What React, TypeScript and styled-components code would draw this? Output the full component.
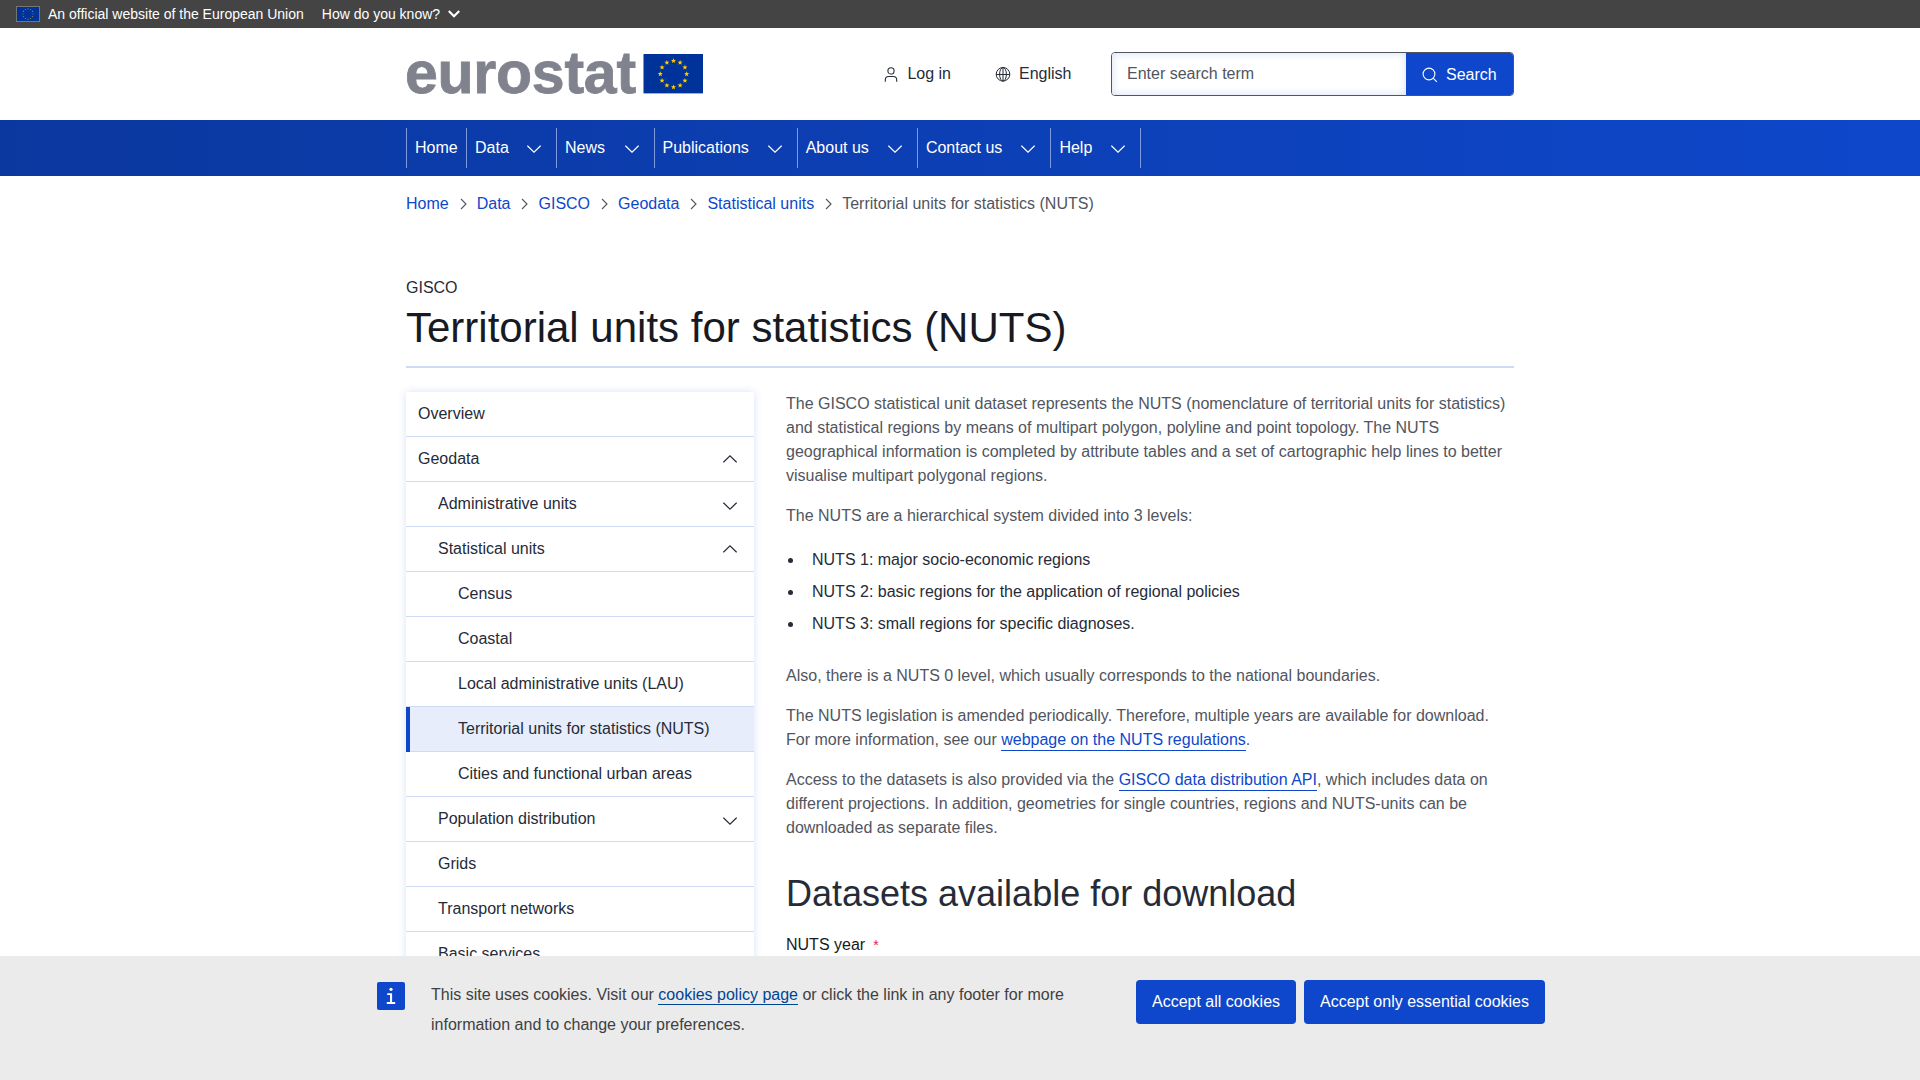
import React from "react";
import styled, { createGlobalStyle } from "styled-components";

const GlobalStyle = createGlobalStyle`
  *, *::before, *::after { box-sizing: border-box; }
  html, body { margin: 0; height: 100%; overflow: hidden; }
  body {
    font-family: Arial, "Liberation Sans", sans-serif;
    font-size: 16px;
    line-height: 24px;
    color: #262b38;
    background: #fff;
  }
  a { text-decoration: none; color: inherit; }
  ul { list-style: none; margin: 0; padding: 0; }
  h1, h2, p { margin: 0; font-weight: 400; }
  button { font: inherit; border: 0; margin: 0; cursor: pointer; }
  svg { display: block; flex: none; }
`;

const Page = styled.div`
  display: flex;
  flex-direction: column;
  height: 1080px;
  overflow: hidden;
`;

const PageBody = styled.div`
  flex: 1;
  min-height: 0;
  overflow: hidden;
`;

const Container = styled.div`
  width: 1108px;
  margin: 0 auto;
`;

const GlobalBanner = styled.div`
  display: flex;
  align-items: center;
  height: 28px;
  padding-left: 16px;
  background: #444;
  color: #fff;
  font-size: 14px;
  line-height: 20px;
`;

const BannerText = styled.span`
  margin-left: 8px;
`;

const BannerButton = styled.button`
  display: flex;
  align-items: center;
  gap: 8px;
  margin-left: 18px;
  padding: 0;
  background: none;
  color: inherit;
`;

const HeaderRow = styled(Container)`
  display: flex;
  height: 92px;
`;

const Logo = styled.a`
  display: flex;
  align-items: flex-start;
  width: 297px;
  padding-top: 26px;
`;

const LogoText = styled.span`
  width: 238px;
  margin-top: -14px;
  margin-left: -1px;
  font-size: 59px;
  line-height: 66px;
  font-weight: 700;
  letter-spacing: -0.25px;
  color: #80838d;
  -webkit-text-stroke: 0.8px #80838d;
`;

const HeaderTools = styled.div`
  display: flex;
  align-items: flex-start;
  margin-left: auto;
  padding-top: 24px;
`;

const ToolLink = styled.a<{ $after: number }>`
  display: flex;
  align-items: center;
  gap: 8px;
  height: 43px;
  margin-right: ${(p) => p.$after}px;
`;

const SearchForm = styled.div`
  display: flex;
  width: 403.5px;
  height: 44px;
  border: 1px solid #515560;
  border-radius: 4px;
  overflow: hidden;
`;

const SearchInput = styled.input`
  flex: 1;
  min-width: 0;
  padding: 0 16px 1px 15.5px;
  border: 0;
  outline: 0;
  font: inherit;
  color: #262b38;
  background: #fff;
  box-shadow: inset 0 0 8px rgba(60, 90, 190, 0.2);
  &::placeholder { color: #515560; opacity: 1; }
`;

const SearchButton = styled.button`
  display: flex;
  align-items: center;
  gap: 8px;
  width: 107px;
  padding: 2px 0 0 16px;
  background: #0e47cb;
  color: #fff;
`;

const NavBar = styled.nav`
  height: 56px;
  padding-top: 8px;
  background: linear-gradient(90deg, #0b389f 0%, #0e47cb 100%);
  color: #fff;
`;

const NavList = styled.ul`
  display: flex;
  height: 40px;
`;

const NavItem = styled.li<{ $width: number }>`
  display: flex;
  align-items: center;
  justify-content: space-between;
  width: ${(p) => p.$width}px;
  padding-left: 8px;
  padding-bottom: 1px;
  border-left: 1px solid #7f9ade;
  white-space: nowrap;
`;

const NavChevron = styled.span`
  width: 29px;
  padding-top: 3px;
`;

const Crumbs = styled.ol`
  display: flex;
  align-items: center;
  margin: 0;
  padding: 16px 0 0;
  list-style: none;
  color: #515560;
`;

const Crumb = styled.li`
  display: flex;
  align-items: center;
`;

const CrumbLink = styled.a`
  color: #0e47cb;
`;

const CrumbSeparator = styled.span`
  padding: 0 8px;
  color: #515560;
`;

const TitleArea = styled.div`
  height: 152px;
  padding-top: 60px;
  border-bottom: 2px solid #cfdaf5;
`;

const Title = styled.h1`
  margin-top: 4px;
  font-size: 42px;
  line-height: 48px;
  color: #171a22;
`;

const Columns = styled.div`
  display: grid;
  grid-template-columns: 348px 728px;
  column-gap: 32px;
  margin-top: 24px;
`;

const SideNav = styled.ul`
  box-shadow: 0 0 8px rgba(14, 71, 203, 0.16);
`;

const SideItem = styled.li<{ $level: number; $active?: boolean }>`
  display: flex;
  justify-content: space-between;
  height: 45px;
  padding: 10px 0 0 ${(p) => (p.$active ? 8 : 12) + p.$level * 20}px;
  background: ${(p) => (p.$active ? "#e7edfb" : "#fff")};
  box-shadow: inset 0 -1px 0 #cfdaf5;
  border-left: ${(p) => (p.$active ? "4px solid #0e47cb" : "none")};
`;

const SideToggle = styled.span<{ $up: boolean }>`
  display: flex;
  width: 31px;
  padding-top: ${(p) => (p.$up ? 8 : 10)}px;
`;

const Prose = styled.main`
  color: #515560;
  p + p { margin-top: 16px; }
`;

const TextLink = styled.a`
  color: #0e47cb;
  border-bottom: 1px solid #0e47cb;
  padding-bottom: 2px;
`;

const Bullets = styled.ul`
  display: flex;
  flex-direction: column;
  gap: 8px;
  padding: 20px 0;
  margin-bottom: 8px;
  color: #262b38;
`;

const Bullet = styled.li`
  display: flex;
  align-items: center;
  &::before {
    content: "";
    width: 5px;
    height: 5px;
    margin: 1px 19px 0 2px;
    border-radius: 50%;
    background: #262b38;
  }
`;

const Subtitle = styled.h2`
  margin-top: 32px;
  font-size: 36px;
  line-height: 44px;
  color: #262b38;
`;

const FieldLabel = styled.label`
  display: block;
  margin-top: 17px;
  color: #171a22;
`;

const Required = styled.span`
  margin-left: 8px;
  font-size: 14px;
  color: #da1e5b;
`;

const CookieBanner = styled.aside`
  flex: none;
  height: 124px;
  padding-top: 24px;
  background: #ebebeb;
  color: #404040;
`;

const CookieInner = styled.div`
  display: flex;
  align-items: flex-start;
  width: 1168px;
  margin: 0 auto 0 377px;
`;

const CookieText = styled.p`
  width: 660px;
  margin-left: 26px;
  line-height: 30px;
`;

const CookieLink = styled.a`
  color: #004494;
  border-bottom: 1px solid #004494;
  padding-bottom: 1px;
`;

const CookieIcon = styled.div`
  padding-top: 2px;
`;

const CookieActions = styled.div`
  display: flex;
  gap: 8px;
  margin-left: auto;
`;

const CookieButton = styled.button<{ $width: number }>`
  width: ${(p) => p.$width}px;
  height: 44px;
  padding: 0 0 1px;
  border-radius: 4px;
  background: #0e47cb;
  color: #fff;
  white-space: nowrap;
`;

const starPoints = (cx: number, cy: number, r: number) =>
  Array.from({ length: 10 }, (_, i) => {
    const a = (Math.PI * i) / 5 - Math.PI / 2;
    const d = i % 2 ? r * 0.42 : r;
    return `${(cx + d * Math.cos(a)).toFixed(2)},${(cy + d * Math.sin(a)).toFixed(2)}`;
  }).join(" ");

const ring = Array.from({ length: 12 }, (_, i) => (Math.PI * i) / 6);

const EuFlag = () => (
  <svg width="60" height="40" viewBox="0 0 60 40">
    <path fill="#039" d="M.5 0H60v39H.5z" />
    <path fill="#8095cc" d="M.5 39H60v.8H.5z" />
    {ring.map((a) => (
      <polygon key={a} fill="#fc0" points={starPoints(30.5 + 13.2 * Math.sin(a), 20 - 13.2 * Math.cos(a), 2.7)} />
    ))}
  </svg>
);

const SmallFlag = () => (
  <svg width="24" height="16" viewBox="0 0 24 16">
    <rect x=".5" y=".5" width="23" height="15" fill="#039" stroke="#757575" />
    {ring.map((a) => (
      <circle key={a} cx={12 + 5.2 * Math.sin(a)} cy={8 - 5.2 * Math.cos(a)} r=".6" fill="#8d8a4a" />
    ))}
  </svg>
);

const Chevron = ({ up = false }: { up?: boolean }) => (
  <svg width="14" height="8" viewBox="0 0 14 8" fill="none" stroke="currentColor" strokeWidth="1.2">
    <path d={up ? "M.4 7.3 7 .9l6.6 6.4" : "M.4.7 7 7.1 13.6.7"} />
  </svg>
);

const menu = [
  { label: "Home", width: 60 },
  { label: "Data", width: 90, sub: true },
  { label: "News", width: 97.5, sub: true },
  { label: "Publications", width: 143.2, sub: true },
  { label: "About us", width: 120.2, sub: true },
  { label: "Contact us", width: 133.5, sub: true },
  { label: "Help", width: 89.8, sub: true },
];

const crumbs = ["Home", "Data", "GISCO", "Geodata", "Statistical units"];

type SideEntry = { label: string; level: number; toggle?: "up" | "down"; active?: boolean };

const sideEntries: SideEntry[] = [
  { label: "Overview", level: 0 },
  { label: "Geodata", level: 0, toggle: "up" },
  { label: "Administrative units", level: 1, toggle: "down" },
  { label: "Statistical units", level: 1, toggle: "up" },
  { label: "Census", level: 2 },
  { label: "Coastal", level: 2 },
  { label: "Local administrative units (LAU)", level: 2 },
  { label: "Territorial units for statistics (NUTS)", level: 2, active: true },
  { label: "Cities and functional urban areas", level: 2 },
  { label: "Population distribution", level: 1, toggle: "down" },
  { label: "Grids", level: 1 },
  { label: "Transport networks", level: 1 },
  { label: "Basic services", level: 1 },
];

export default function App() {
  return (
    <Page>
      <GlobalStyle />
      <PageBody>
        <GlobalBanner>
          <SmallFlag />
          <BannerText>An official website of the European Union</BannerText>
          <BannerButton>
            How do you know?
            <svg width="12" height="8" viewBox="0 0 12 8" fill="none" stroke="#fff" strokeWidth="2.2">
              <path d="M.8 1 6 6.2 11.2 1" />
            </svg>
          </BannerButton>
        </GlobalBanner>

        <HeaderRow>
          <Logo href="#">
            <LogoText>eurostat</LogoText>
            <EuFlag />
          </Logo>
          <HeaderTools>
            <ToolLink href="#" $after={44}>
              <svg width="16" height="16" viewBox="0 0 16 16" fill="none" stroke="currentColor" strokeWidth="1.1">
                <circle cx="8" cy="4.9" r="3.1" />
                <path d="M2.3 15.7v-1.9c0-2 1.4-3.3 3.4-3.3h4.6c2 0 3.4 1.3 3.4 3.3v1.9" />
              </svg>
              Log in
            </ToolLink>
            <ToolLink href="#" $after={39}>
              <svg width="16" height="16" viewBox="0 0 16 16" fill="none" stroke="currentColor" strokeWidth="1">
                <circle cx="8" cy="8.3" r="6.8" />
                <ellipse cx="8" cy="8.3" rx="3.4" ry="6.8" />
                <path d="M1.2 8.5h13.6M8 1.5v13.6" />
              </svg>
              English
            </ToolLink>
            <SearchForm>
              <SearchInput placeholder="Enter search term" />
              <SearchButton>
                <svg width="16" height="16" viewBox="0 0 16 16" fill="none" stroke="currentColor" strokeWidth="1.1">
                  <circle cx="7" cy="7" r="5.9" />
                  <path d="m11.3 11.3 3.6 3.6" />
                </svg>
                Search
              </SearchButton>
            </SearchForm>
          </HeaderTools>
        </HeaderRow>

        <NavBar>
          <Container>
            <NavList>
              {menu.map((m) => (
                <NavItem key={m.label} $width={m.width}>
                  {m.label}
                  {m.sub && (
                    <NavChevron>
                      <Chevron />
                    </NavChevron>
                  )}
                </NavItem>
              ))}
              <NavItem $width={9} />
            </NavList>
          </Container>
        </NavBar>

        <Container>
          <Crumbs>
            {crumbs.map((c) => (
              <Crumb key={c}>
                <CrumbLink href="#">{c}</CrumbLink>
                <CrumbSeparator>
                  <svg width="12" height="12" viewBox="0 0 12 12" fill="none" stroke="currentColor" strokeWidth="1.1">
                    <path d="m4 1 5 5-5 5" />
                  </svg>
                </CrumbSeparator>
              </Crumb>
            ))}
            <Crumb>Territorial units for statistics (NUTS)</Crumb>
          </Crumbs>

          <TitleArea>
            GISCO
            <Title>Territorial units for statistics (NUTS)</Title>
          </TitleArea>

          <Columns>
            <SideNav>
              {sideEntries.map((e) => (
                <SideItem key={e.label} $level={e.level} $active={e.active}>
                  {e.label}
                  {e.toggle && (
                    <SideToggle $up={e.toggle === "up"}>
                      <Chevron up={e.toggle === "up"} />
                    </SideToggle>
                  )}
                </SideItem>
              ))}
            </SideNav>

            <Prose>
              <p>
                The GISCO statistical unit dataset represents the NUTS (nomenclature of territorial units for
                statistics) and statistical regions by means of multipart polygon, polyline and point topology. The
                NUTS geographical information is completed by attribute tables and a set of cartographic help lines
                to better visualise multipart polygonal regions.
              </p>
              <p>The NUTS are a hierarchical system divided into 3 levels:</p>
              <Bullets>
                <Bullet>NUTS 1: major socio-economic regions</Bullet>
                <Bullet>NUTS 2: basic regions for the application of regional policies</Bullet>
                <Bullet>NUTS 3: small regions for specific diagnoses.</Bullet>
              </Bullets>
              <p>Also, there is a NUTS 0 level, which usually corresponds to the national boundaries.</p>
              <p>
                The NUTS legislation is amended periodically. Therefore, multiple years are available for download.
                For more information, see our <TextLink href="#">webpage on the NUTS regulations</TextLink>.
              </p>
              <p>
                Access to the datasets is also provided via the{" "}
                <TextLink href="#">GISCO data distribution API</TextLink>, which includes data on different
                projections. In addition, geometries for single countries, regions and NUTS-units can be downloaded
                as separate files.
              </p>
              <Subtitle>Datasets available for download</Subtitle>
              <FieldLabel>
                NUTS year<Required>*</Required>
              </FieldLabel>
            </Prose>
          </Columns>
        </Container>
      </PageBody>

      <CookieBanner>
        <CookieInner>
          <CookieIcon>
            <svg width="28" height="28" viewBox="0 0 28 28">
              <rect width="28" height="28" rx="2" fill="#0e47cb" />
              <circle cx="14" cy="7.3" r="1.6" fill="#fff" />
              <path fill="#fff" d="M10.2 11.2h4.9v8.9h3.1V22H9.8v-1.9H13v-7h-2.8z" />
            </svg>
          </CookieIcon>
          <CookieText>
            This site uses cookies. Visit our <CookieLink href="#">cookies policy page</CookieLink> or click the link
            in any footer for more information and to change your preferences.
          </CookieText>
          <CookieActions>
            <CookieButton $width={160}>Accept all cookies</CookieButton>
            <CookieButton $width={241}>Accept only essential cookies</CookieButton>
          </CookieActions>
        </CookieInner>
      </CookieBanner>
    </Page>
  );
}
